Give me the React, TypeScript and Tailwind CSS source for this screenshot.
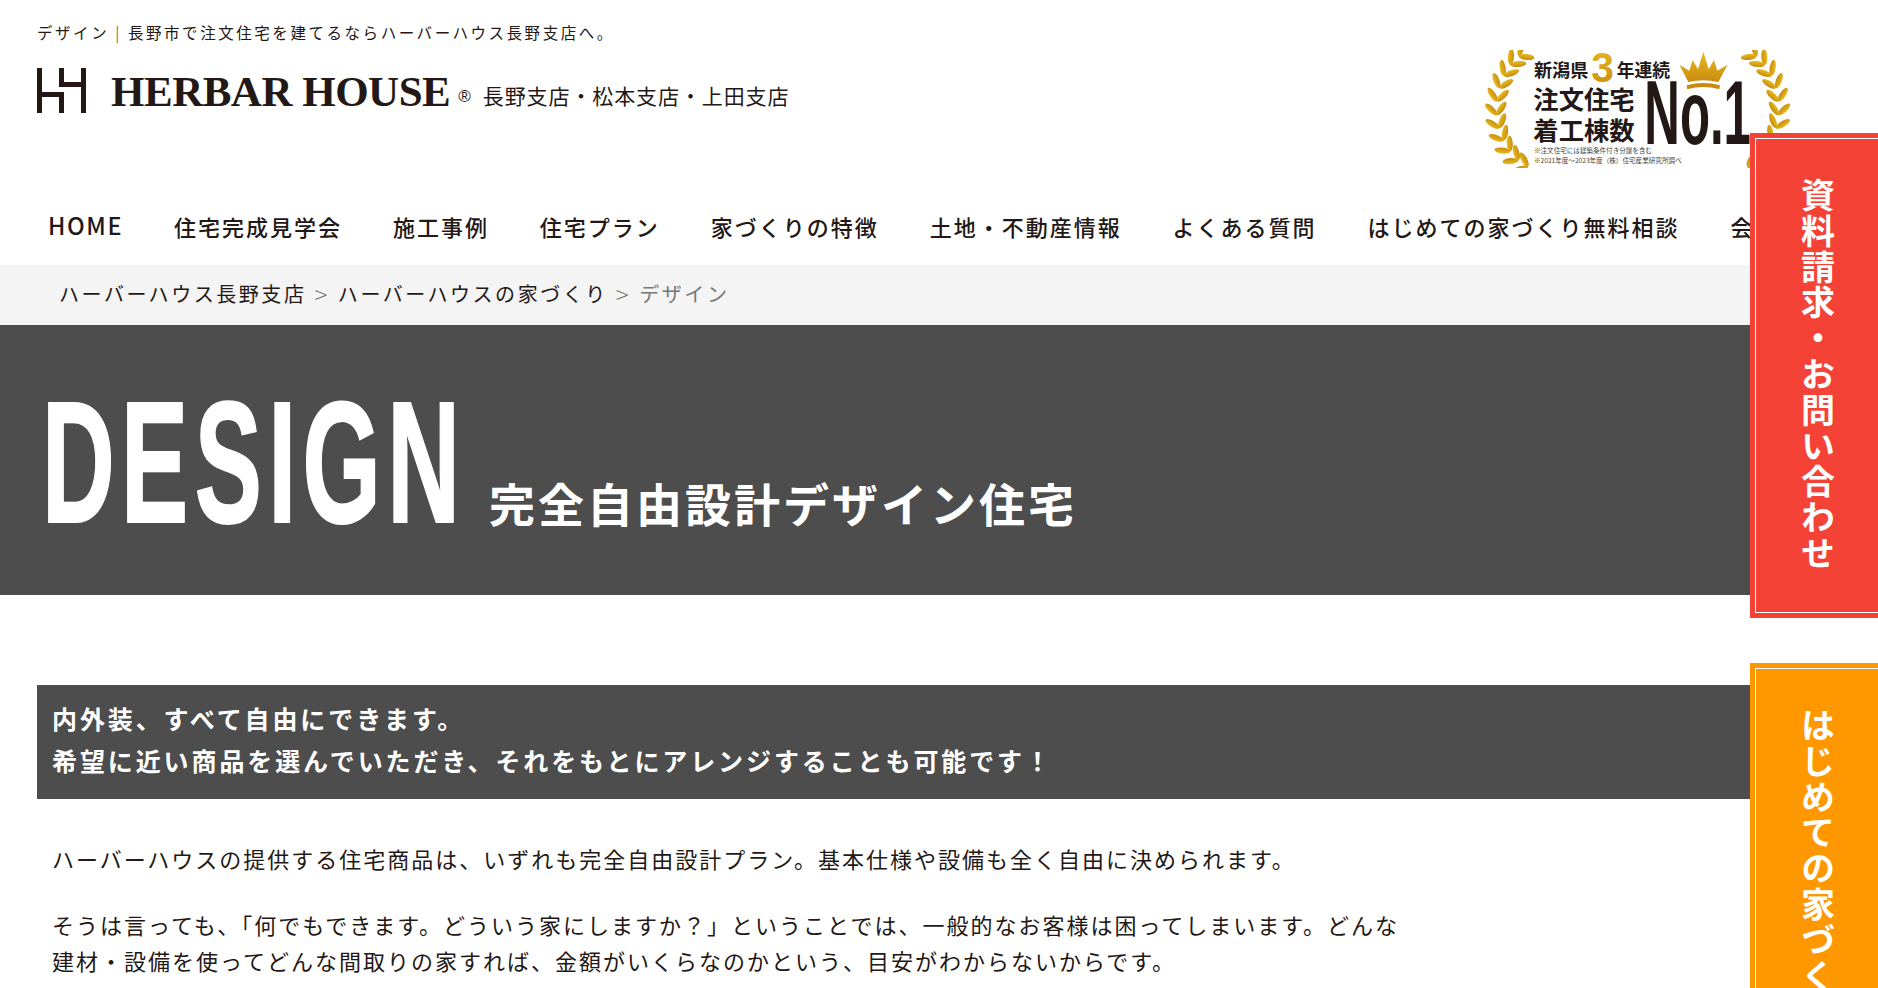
const jp = "font-['Noto_Sans_CJK_JP','Noto_Sans',sans-serif]";

const navItems = [
  "HOME",
  "住宅完成見学会",
  "施工事例",
  "住宅プラン",
  "家づくりの特徴",
  "土地・不動産情報",
  "よくある質問",
  "はじめての家づくり無料相談",
  "会社案内",
];

function LogoMark() {
  return (
    <svg width="50" height="46" viewBox="0 0 50 46" fill="#231815">
      <rect x="0" y="0" width="5" height="45" />
      <rect x="0" y="24" width="27" height="5" />
      <rect x="22" y="24" width="5" height="21" />
      <rect x="22" y="0" width="5" height="19" />
      <rect x="22" y="14" width="27" height="5" />
      <rect x="44" y="0" width="5" height="45" />
    </svg>
  );
}

function Laurel() {
  const rad = Math.PI / 180;
  const leaves = Array.from({ length: 11 }).map((_, i) => {
    const theta = 112 + i * 12.4;
    const t = theta + 90;
    const x = 260 + 150 * Math.cos(theta * rad);
    const y = 240 + 189 * Math.sin(theta * rad);
    return { x, y, t, i };
  });
  return (
    <g fill="url(#gold)">
      {leaves.map((l) => {
        const outer = l.t - 40;
        const inner = l.t + 40;
        return (
          <g key={l.i}>
            <ellipse
              cx={l.x + 24 * Math.cos(outer * rad)}
              cy={l.y + 24 * Math.sin(outer * rad)}
              rx="24"
              ry="9"
              transform={`rotate(${outer} ${l.x + 24 * Math.cos(outer * rad)} ${l.y + 24 * Math.sin(outer * rad)})`}
            />
            <ellipse
              cx={l.x + 24 * Math.cos(inner * rad)}
              cy={l.y + 24 * Math.sin(inner * rad)}
              rx="24"
              ry="9"
              transform={`rotate(${inner} ${l.x + 24 * Math.cos(inner * rad)} ${l.y + 24 * Math.sin(inner * rad)})`}
            />
          </g>
        );
      })}
    </g>
  );
}

function Badge() {
  return (
    <svg width="310" height="118" viewBox="69 60 930 354" className="shrink-0">
      <defs>
        <linearGradient id="gold" x1="0" y1="0" x2="0" y2="1">
          <stop offset="0" stopColor="#e8bd1f" />
          <stop offset="1" stopColor="#c98a0f" />
        </linearGradient>
      </defs>
      <g transform="translate(0 -5)">
        <Laurel />
      </g>
      <g transform="matrix(-1 0 0 1 1066 -5)">
        <Laurel />
      </g>
      <g fontFamily="'Noto Sans CJK JP', sans-serif" fontWeight="700" fill="#231815">
        <text x="222" y="141" fontSize="54" textLength="163" lengthAdjust="spacingAndGlyphs">新潟県</text>
        <text x="470" y="141" fontSize="54" textLength="160" lengthAdjust="spacingAndGlyphs">年連続</text>
        <text x="220" y="236" fontSize="75" textLength="304" lengthAdjust="spacingAndGlyphs">注文住宅</text>
        <text x="220" y="331" fontSize="75" textLength="304" lengthAdjust="spacingAndGlyphs">着工棟数</text>
        <text x="222" y="369" fontSize="19" fontWeight="400" fill="#444" textLength="354" lengthAdjust="spacingAndGlyphs">※注文住宅には建築条件付き分譲を含む</text>
        <text x="222" y="400" fontSize="19" fontWeight="400" fill="#444" textLength="443" lengthAdjust="spacingAndGlyphs">※2021年度～2023年度（株）住宅産業研究所調べ</text>
      </g>
      <text x="394" y="155" fontFamily="'Liberation Sans', sans-serif" fontWeight="700" fontSize="128" fill="url(#gold)" textLength="68" lengthAdjust="spacingAndGlyphs">3</text>
      <text x="553" y="342" fontFamily="'Liberation Sans', sans-serif" fontWeight="700" fontSize="270" fill="#231815" textLength="320" lengthAdjust="spacingAndGlyphs">No.1</text>
      <path
        d="M658 104 L688 122 L698 90 L714 118 L730 65 L746 118 L762 90 L772 122 L803 104 L775 156 Q730 146 685 156 Z"
        fill="url(#gold)"
      />
      <path d="M680 166 Q730 152 780 166 L778 178 Q730 164 682 178 Z" fill="#c98a0f" />
    </svg>
  );
}

function SideButton({ label, className }: { label: string; className: string }) {
  return (
    <div className={`absolute left-[1750px] w-[140px] p-[5px] ${className}`}>
      <div className="flex h-full justify-center border border-white pt-[39px] pr-[5px]">
        <span className="h-fit text-[34px] leading-none font-bold tracking-[1.8px] text-white [writing-mode:vertical-rl]">
          {label}
        </span>
      </div>
    </div>
  );
}

export default function App() {
  return (
    <div className={`relative h-[988px] w-full overflow-hidden bg-white text-[#231815] ${jp}`}>
      <header className="flex h-[205px] items-start justify-between pr-[85px]">
        <div className="pl-[37px]">
          <p className="mt-[21px] text-[15.5px] leading-[22px] tracking-[2.55px] whitespace-nowrap">
            デザイン<span className="mx-[6px] text-[#b5651d]">|</span>長野市で注文住宅を建てるならハーバーハウス長野支店へ。
          </p>
          <div className="mt-[25px] flex items-center">
            <LogoMark />
            <span className="ml-[24px] font-['Liberation_Serif',serif] text-[43px] leading-none font-bold tracking-[-0.5px] whitespace-nowrap">
              HERBAR HOUSE
            </span>
            <span className="mt-[12px] ml-[8px] font-['Liberation_Sans',sans-serif] text-[17px]">®</span>
            <span className="mt-[9px] ml-[12px] text-[21px] leading-none tracking-[0.9px] whitespace-nowrap">
              長野支店・松本支店・上田支店
            </span>
          </div>
        </div>
        <div className="mt-[50px]">
          <Badge />
        </div>
      </header>

      <nav className="flex h-[60px] items-center gap-[50.9px] pb-[18px] pl-[48px] text-[22px] font-medium tracking-[2px] whitespace-nowrap">
        {navItems.map((item) => (
          <span key={item} className={item === "HOME" ? "text-[23.5px] tracking-[1.6px]" : ""}>
            {item}
          </span>
        ))}
      </nav>

      <div className="flex h-[60px] items-center gap-[8px] bg-[#f4f4f4] pb-[2px] pl-[59px] text-[20px] tracking-[2.55px] whitespace-nowrap">
        <span>ハーバーハウス長野支店</span>
        <span className="text-[24px] leading-none font-light text-[#777]">&gt;</span>
        <span>ハーバーハウスの家づくり</span>
        <span className="text-[24px] leading-none font-light text-[#777]">&gt;</span>
        <span className="text-[#777]">デザイン</span>
      </div>

      <section className="flex h-[270px] items-end bg-[#4d4d4d] pb-[56px] pl-[42px] text-white">
        <h1 className="mb-[7px] w-[414px] origin-left scale-x-[0.585] font-['Liberation_Sans',sans-serif] text-[172px] leading-[140px] font-bold tracking-[11px] [-webkit-text-stroke:2px_white]">
          DESIGN
        </h1>
        <p className="mb-[7px] ml-[33px] text-[46px] leading-[60px] font-bold tracking-[3px] whitespace-nowrap">
          完全自由設計デザイン住宅
        </p>
      </section>

      <main className="pt-[90px] pl-[37px]">
        <h2 className="bg-[#4d4d4d] pt-[12px] pb-[18px] pl-[15px] text-[25px] leading-[42px] font-bold tracking-[2.9px] text-white">
          内外装、すべて自由にできます。
          <br />
          希望に近い商品を選んでいただき、それをもとにアレンジすることも可能です！
        </h2>
        <div className="pt-[41px] pl-[15px] text-[22px] leading-[36px] tracking-[2px] whitespace-nowrap">
          <p>ハーバーハウスの提供する住宅商品は、いずれも完全自由設計プラン。基本仕様や設備も全く自由に決められます。</p>
          <p className="mt-[30px]">
            そうは言っても、「何でもできます。どういう家にしますか？」ということでは、一般的なお客様は困ってしまいます。どんな
            <br />
            建材・設備を使ってどんな間取りの家すれば、金額がいくらなのかという、目安がわからないからです。
          </p>
        </div>
      </main>

      <SideButton label="資料請求・お問い合わせ" className="top-[133px] h-[485px] bg-[#f44336]" />
      <SideButton label="はじめての家づくり無料相談" className="top-[663px] h-[520px] bg-[#ff9800]" />
    </div>
  );
}
